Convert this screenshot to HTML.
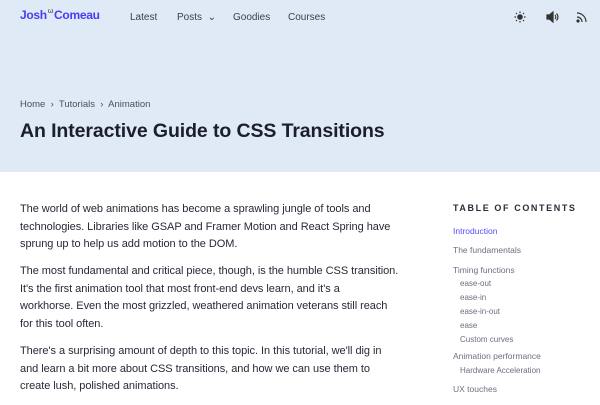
<!DOCTYPE html>
<html><head><style>
*{margin:0;padding:0;box-sizing:border-box}
body{width:600px;height:402px;overflow:hidden;font-family:"Liberation Sans",sans-serif;background:#fff;color:#1c1f2a}
.hdr{position:absolute;left:0;top:0;width:600px;height:172px;background:#dfeaf6}
.logo{position:absolute;left:20px;top:8px;font-size:12px;font-weight:bold;color:#4a3cf5;letter-spacing:-.3px}
.nav{position:absolute;top:12px;font-size:10px;color:#3a3f4e}
.bc{position:absolute;left:20px;top:99px;font-size:9.5px;color:#4a5060}
h1{position:absolute;left:20px;top:120px;font-size:19.5px;font-weight:bold;color:#1c1f2a;letter-spacing:-.1px;white-space:nowrap}
.main{position:absolute;left:20px;top:201px;width:420px;font-size:11px;line-height:17.6px;color:#262a36;letter-spacing:-.05px;white-space:nowrap}
.main p{margin-bottom:9.5px}
.toc{position:absolute;left:453px;top:203px;font-size:8.5px;color:#6b7080}
.toc div{position:absolute;white-space:nowrap}
.s{left:7px;font-size:8px}
</style></head><body>
<div class="hdr"></div>
<div class="logo">Josh <span style="font-size:7px;position:relative;top:-6px;margin:0 -2px;color:#333;font-weight:normal">ω</span> Comeau</div>
<div class="nav" style="left:130px">Latest</div>
<div class="nav" style="left:177px">Posts &nbsp;⌄</div>
<div class="nav" style="left:233px">Goodies</div>
<div class="nav" style="left:288px">Courses</div>
<svg style="position:absolute;left:514px;top:11px" width="12" height="12" viewBox="0 0 12 12" fill="none" stroke="#333" stroke-width="1.2"><circle cx="6" cy="6" r="2.2" fill="#333"/><path d="M6 0.5v1.5M6 10v1.5M0.5 6h1.5M10 6h1.5M2 2l1 1M9 9l1 1M2 10l1-1M9 3l1-1"/></svg>
<svg style="position:absolute;left:546px;top:11px" width="13" height="12" viewBox="0 0 13 12" fill="none" stroke="#333" stroke-width="1.2"><path d="M1 4h2.5L7 1v10L3.5 8H1z" fill="#333"/><path d="M9 4a3 3 0 0 1 0 4M10.5 2.5a5 5 0 0 1 0 7"/></svg>
<svg style="position:absolute;left:576px;top:11px" width="12" height="12" viewBox="0 0 12 12" fill="none" stroke="#333" stroke-width="1.2"><circle cx="2" cy="10" r="1" fill="#333"/><path d="M1 6a5 5 0 0 1 5 5M1 2a9 9 0 0 1 9 9"/></svg>
<div class="bc">Home &nbsp;›&nbsp; Tutorials &nbsp;›&nbsp; Animation</div>
<h1>An Interactive Guide to CSS Transitions</h1>
<div class="main">
<p>The world of web animations has become a sprawling jungle of tools and<br>technologies. Libraries like GSAP and Framer Motion and React Spring have<br>sprung up to help us add motion to the DOM.</p>
<p>The most fundamental and critical piece, though, is the humble CSS transition.<br>It's the first animation tool that most front-end devs learn, and it's a<br>workhorse. Even the most grizzled, weathered animation veterans still reach<br>for this tool often.</p>
<p>There's a surprising amount of depth to this topic. In this tutorial, we'll dig in<br>and learn a bit more about CSS transitions, and how we can use them to<br>create lush, polished animations.</p>
</div>
<div class="toc">
<div style="top:0;font-size:9px;font-weight:bold;letter-spacing:1.6px;color:#2a2e3a">TABLE OF CONTENTS</div>
<div style="top:23px;color:#5a4cf5">Introduction</div>
<div style="top:42px">The fundamentals</div>
<div style="top:62px">Timing functions</div>
<div class="s" style="top:76px">ease-out</div>
<div class="s" style="top:90px">ease-in</div>
<div class="s" style="top:104px">ease-in-out</div>
<div class="s" style="top:118px">ease</div>
<div class="s" style="top:132px">Custom curves</div>
<div style="top:148px">Animation performance</div>
<div class="s" style="top:163px">Hardware Acceleration</div>
<div style="top:181px">UX touches</div>
</div>
</body></html>
